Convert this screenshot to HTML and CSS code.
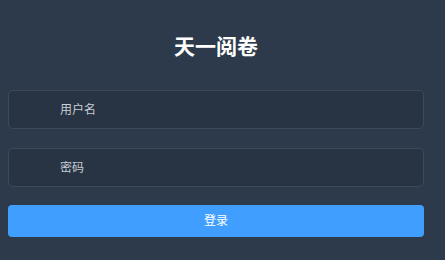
FILE: index.html
```html
<!DOCTYPE html>
<html lang="zh">
<head>
<meta charset="utf-8">
<link rel="stylesheet" href="styles.css">
</head>
<body>
<div class="login">
  <h1 class="title">天一阅卷</h1>
  <div class="field"><span class="placeholder">用户名</span></div>
  <div class="field field-pass"><span class="placeholder">密码</span></div>
  <button class="btn">登录</button>
</div>
</body>
</html>
```
FILE: styles.css
```css
html, body {
  margin: 0;
  padding: 0;
  background: #2d3a4b;
  height: 100%;
}
body {
  font-family: "Noto Sans CJK SC", "Noto Sans", sans-serif;
}
.login {
  width: 416px;
  margin-left: 8px;
  padding-top: 32px;
  display: flex;
  flex-direction: column;
}
.title {
  margin: 0;
  font-size: 21px;
  line-height: 26px;
  font-weight: 700;
  color: #ffffff;
  text-align: center;
}
.field {
  margin-top: 32px;
  height: 39px;
  box-sizing: border-box;
  border: 1px solid rgba(255, 255, 255, 0.1);
  background: rgba(0, 0, 0, 0.1);
  border-radius: 5px;
  display: flex;
  align-items: center;
  padding-left: 51px;
  padding-bottom: 2px;
}
.field-pass {
  margin-top: 19px;
}
.placeholder {
  font-size: 12px;
  line-height: 14px;
  color: #c9ced6;
}
.btn {
  margin-top: 18px;
  height: 32px;
  border: none;
  border-radius: 4px;
  background: #409eff;
  color: #ffffff;
  font-family: inherit;
  font-size: 12px;
  line-height: 14px;
  padding: 0 0 2px 0;
}
```
